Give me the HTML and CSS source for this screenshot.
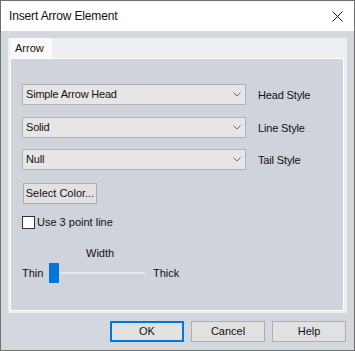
FILE: index.html
```html
<!DOCTYPE html>
<html>
<head>
<meta charset="utf-8">
<link rel="stylesheet" href="styles.css">
</head>
<body>
<div class="window">
  <div class="titlebar">
    <span class="title">Insert Arrow Element</span>
    <svg class="close" width="11" height="11" viewBox="0 0 11 11"><path d="M0.5 0.5 L10.5 10.5 M10.5 0.5 L0.5 10.5" stroke="#111" stroke-width="1" fill="none"/></svg>
  </div>
  <div class="body">
    <div class="tabctl">
      <div class="strip"><div class="tab">Arrow</div></div>
      <div class="page">
        <div class="row">
          <div class="combo"><span>Simple Arrow Head</span><svg class="chev" width="8" height="5" viewBox="0 0 8 5"><path d="M0.5 0.5 L4 4 L7.5 0.5" stroke="#6a6a6a" fill="none"/></svg></div>
          <span class="lbl">Head Style</span>
        </div>
        <div class="row r2">
          <div class="combo"><span>Solid</span><svg class="chev" width="8" height="5" viewBox="0 0 8 5"><path d="M0.5 0.5 L4 4 L7.5 0.5" stroke="#6a6a6a" fill="none"/></svg></div>
          <span class="lbl">Line Style</span>
        </div>
        <div class="row r3">
          <div class="combo"><span>Null</span><svg class="chev" width="8" height="5" viewBox="0 0 8 5"><path d="M0.5 0.5 L4 4 L7.5 0.5" stroke="#6a6a6a" fill="none"/></svg></div>
          <span class="lbl">Tail Style</span>
        </div>
        <div class="btn color-btn">Select Color...</div>
        <div class="check-row"><span class="box"></span><span>Use 3 point line</span></div>
        <div class="width-lbl">Width</div>
        <div class="slider-row">
          <span class="thin">Thin</span>
          <div class="slider"><div class="track"></div><div class="thumb"></div></div>
          <span>Thick</span>
        </div>
      </div>
    </div>
    <div class="buttons">
      <div class="btn ok">OK</div>
      <div class="btn">Cancel</div>
      <div class="btn">Help</div>
    </div>
  </div>
</div>
</body>
</html>
```
FILE: styles.css
```css
html, body {
  margin: 0;
  padding: 0;
}
body {
  font-family: "Liberation Sans", Arial, sans-serif;
  font-size: 11px;
  color: #111;
  background: #fff;
}
.window {
  width: 355px;
  height: 351px;
  box-sizing: border-box;
  border: 1px solid #6e6e6e;
  display: flex;
  flex-direction: column;
  background: #d3d7de;
}
.titlebar {
  height: 30px;
  background: #fff;
  display: flex;
  align-items: center;
  justify-content: space-between;
  padding-left: 8px;
  padding-right: 11px;
  flex: none;
}
.title {
  font-size: 12px;
  letter-spacing: -0.15px;
}
.close {
  display: block;
}
.body {
  flex: 1;
  padding: 7px 7px 0 7px;
  display: flex;
  flex-direction: column;
}
.tabctl {
  height: 275px;
  background: #eceef0;
  display: flex;
  flex-direction: column;
}
.strip {
  height: 20px;
  flex: none;
  display: flex;
}
.tab {
  margin-left: 2px;
  width: 42px;
  background: #f9f9f9;
  box-sizing: border-box;
  padding-left: 5px;
  line-height: 20px;
}
.page {
  flex: 1;
  margin: 0 3px 2px 2px;
  border: 1px solid #fff;
  background: #cfd3db;
  padding: 25px 0 0 11px;
  display: flex;
  flex-direction: column;
  align-items: flex-start;
}
.row {
  display: flex;
  align-items: center;
  height: 21px;
}
.r2 { margin-top: 12px; }
.r3 { margin-top: 11px; }
.combo {
  width: 224px;
  height: 21px;
  box-sizing: border-box;
  border: 1px solid #b3b3b3;
  background: #e6e6e6;
  display: flex;
  align-items: center;
  justify-content: space-between;
  padding: 0 4px 0 3px;
  line-height: 13px;
  letter-spacing: -0.2px;
}
.chev {
  display: block;
}
.lbl {
  margin-left: 12px;
  letter-spacing: -0.15px;
}
.btn {
  width: 74px;
  height: 21px;
  box-sizing: border-box;
  border: 1px solid #adadad;
  background: #e1e1e1;
  display: flex;
  align-items: center;
  justify-content: center;
  line-height: 13px;
}
.color-btn {
  margin-top: 13px;
  margin-left: 1px;
}
.check-row {
  margin-top: 12px;
  display: flex;
  align-items: center;
  line-height: 13px;
  height: 13px;
}
.box {
  width: 13px;
  height: 13px;
  box-sizing: border-box;
  border: 1px solid #333;
  background: #fff;
  margin-right: 2px;
}
.width-lbl {
  margin-top: 18px;
  margin-left: 64px;
  line-height: 13px;
}
.slider-row {
  margin-top: 3px;
  height: 20px;
  display: flex;
  align-items: center;
}
.thin {
  width: 27px;
}
.slider {
  position: relative;
  width: 104px;
  height: 20px;
}
.track {
  position: absolute;
  left: 10px;
  top: 9px;
  width: 86px;
  height: 2px;
  background: #e6e9ec;
}
.thumb {
  position: absolute;
  left: 0;
  top: 0;
  width: 10px;
  height: 20px;
  background: #0078d7;
}
.buttons {
  margin-top: 8px;
  margin-right: 1px;
  display: flex;
  justify-content: flex-end;
  gap: 7px;
}
.ok {
  border: 2px solid #0078d7;
}
```
